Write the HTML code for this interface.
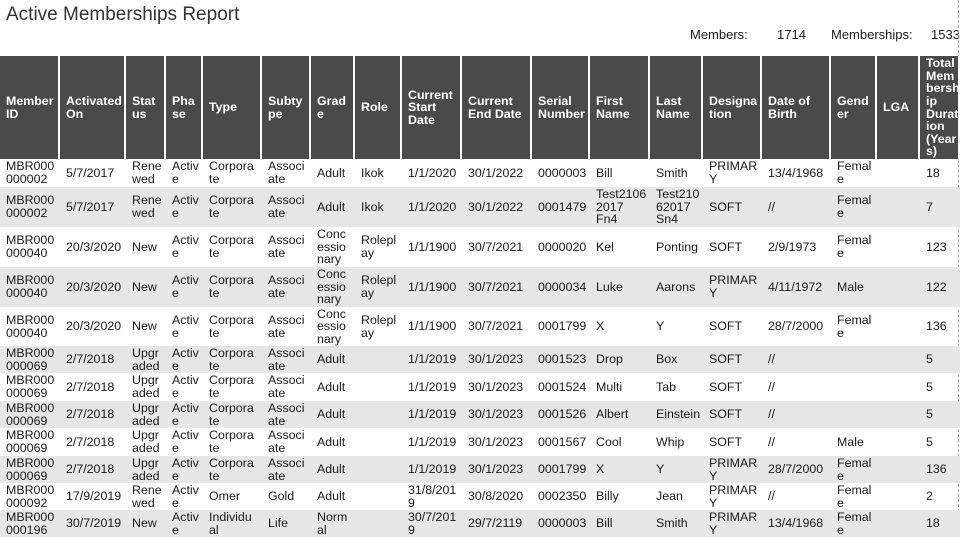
<!DOCTYPE html>
<html><head><meta charset="utf-8"><style>
*{margin:0;padding:0;box-sizing:border-box}
body{width:962px;height:537px;overflow:hidden;background:#fff;font-family:"Liberation Sans",Arial,sans-serif;color:#1a1a1a;position:relative}
.t{position:absolute;left:6px;top:4px;font-size:19px;color:#333}
.m{position:absolute;top:27px;font-size:13px;color:#1a1a1a}
.r{position:absolute;left:0;display:flex;width:960px}
.c{display:flex;align-items:center;padding-left:6px;font-size:12.4px;line-height:12.6px;overflow:hidden;white-space:nowrap}
.h .c{background:#4a4a4a;color:#fff;font-weight:bold;border-right:2px solid #fff}
.g{background:#e6e6e6}
.dash{position:absolute;left:958px;top:0;height:537px;border-left:1px dashed #aaa}
</style></head><body>
<div class="t">Active Memberships Report</div>
<div class="m" style="left:690px">Members:</div>
<div class="m" style="left:777px">1714</div>
<div class="m" style="left:831px">Memberships:</div>
<div class="m" style="left:931px">1533</div>
<div class="dash"></div>
<div id="rows"></div>
<script>
var w=[60,66,40,37,59,49,44,47,60,70,58,60,53,59,69,46,43,40];
var H=["Member<br>ID","Activated<br>On","Stat<br>us","Pha<br>se","Type","Subty<br>pe","Grad<br>e","Role","Current<br>Start<br>Date","Current<br>End Date","Serial<br>Number","First<br>Name","Last<br>Name","Designa<br>tion","Date of<br>Birth","Gend<br>er","LGA","Total<br>Mem<br>bersh<br>ip<br>Durat<br>ion<br>(Year<br>s)"];
var A="Corpora<br>te",S="Associ<br>ate",U="Upgr<br>aded",AC="Activ<br>e",F="Femal<br>e",P="PRIMAR<br>Y",M69="MBR000<br>000069";
var D=[
[159,28,["MBR000<br>000002","5/7/2017","Rene<br>wed",AC,A,S,"Adult","Ikok","1/1/2020","30/1/2022","0000003","Bill","Smith",P,"13/4/1968",F,"","18"]],
[187,40,["MBR000<br>000002","5/7/2017","Rene<br>wed",AC,A,S,"Adult","Ikok","1/1/2020","30/1/2022","0001479","Test2106<br>2017<br>Fn4","Test210<br>62017<br>Sn4","SOFT","//",F,"","7"]],
[227,40,["MBR000<br>000040","20/3/2020","New",AC,A,S,"Conc<br>essio<br>nary","Rolepl<br>ay","1/1/1900","30/7/2021","0000020","Kel","Ponting","SOFT","2/9/1973",F,"","123"]],
[267,40,["MBR000<br>000040","20/3/2020","New",AC,A,S,"Conc<br>essio<br>nary","Rolepl<br>ay","1/1/1900","30/7/2021","0000034","Luke","Aarons",P,"4/11/1972","Male","","122"]],
[307,39,["MBR000<br>000040","20/3/2020","New",AC,A,S,"Conc<br>essio<br>nary","Rolepl<br>ay","1/1/1900","30/7/2021","0001799","X","Y","SOFT","28/7/2000",F,"","136"]],
[346,27,[M69,"2/7/2018",U,AC,A,S,"Adult","","1/1/2019","30/1/2023","0001523","Drop","Box","SOFT","//","","","5"]],
[373,28,[M69,"2/7/2018",U,AC,A,S,"Adult","","1/1/2019","30/1/2023","0001524","Multi","Tab","SOFT","//","","","5"]],
[401,27,[M69,"2/7/2018",U,AC,A,S,"Adult","","1/1/2019","30/1/2023","0001526","Albert","Einstein","SOFT","//","","","5"]],
[428,28,[M69,"2/7/2018",U,AC,A,S,"Adult","","1/1/2019","30/1/2023","0001567","Cool","Whip","SOFT","//","Male","","5"]],
[456,27,[M69,"2/7/2018",U,AC,A,S,"Adult","","1/1/2019","30/1/2023","0001799","X","Y",P,"28/7/2000",F,"","136"]],
[483,27,["MBR000<br>000092","17/9/2019","Rene<br>wed",AC,"Omer","Gold","Adult","","31/8/201<br>9","30/8/2020","0002350","Billy","Jean",P,"//",F,"","2"]],
[510,27,["MBR000<br>000196","30/7/2019","New",AC,"Individu<br>al","Life","Norm<br>al","","30/7/201<br>9","29/7/2119","0000003","Bill","Smith",P,"13/4/1968",F,"","18"]]
];
var h='<div class="r h" style="top:56px;height:103px">';
H.forEach(function(t,i){h+='<div class="c" style="width:'+w[i]+'px">'+t+'</div>'});
h+='</div>';
D.forEach(function(r,k){h+='<div class="r'+(k%2?' g':'')+'" style="top:'+r[0]+'px;height:'+r[1]+'px">';
r[2].forEach(function(t,i){h+='<div class="c" style="width:'+w[i]+'px">'+t+'</div>'});h+='</div>'});
document.getElementById('rows').innerHTML=h;
</script>
</body></html>
